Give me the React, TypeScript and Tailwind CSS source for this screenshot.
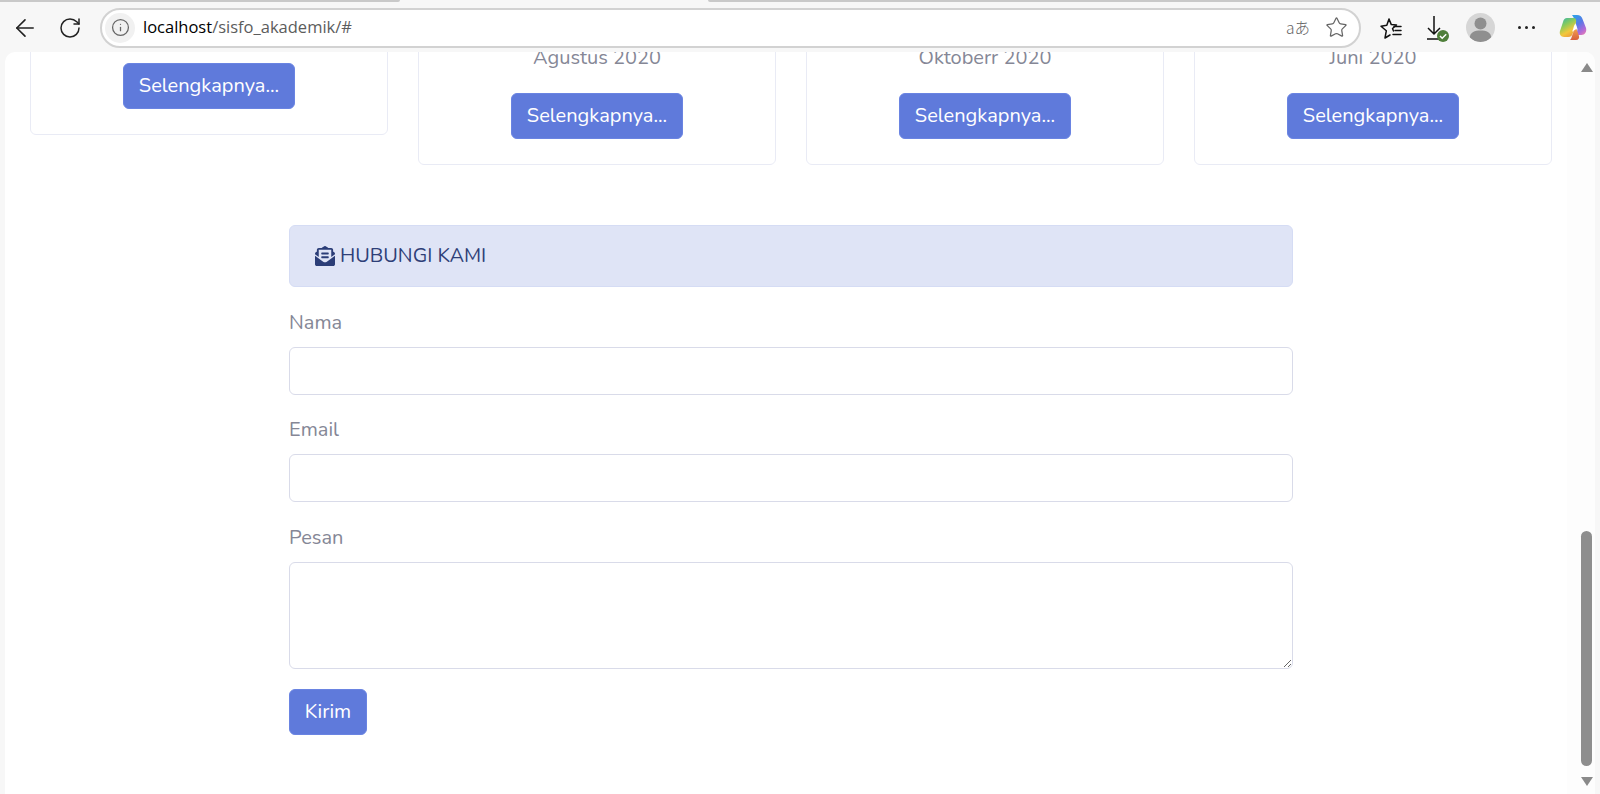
import React from "react";
import { ArrowLeft, RotateCw, Info, Star } from "lucide-react";
import { FaEnvelopeOpenText } from "react-icons/fa";

const Btn = ({ children, cls = "" }: { children: React.ReactNode; cls?: string }) => (
  <button className={`h-[46px] shrink-0 rounded-[6px] border border-[#6a84e2] bg-[#5f7adb] text-[20px] leading-none text-white ${cls}`}>
    {children}
  </button>
);

const Card = ({ date, h }: { date?: string; h: string }) => (
  <div className={`flex w-[358px] shrink-0 flex-col items-center justify-end rounded-[6px] border border-[#e9ebf5] bg-white pb-[25px] ${h}`}>
    {date && <div className="mb-[20px] text-[20px] leading-[30px] text-[#858796]">{date}</div>}
    <Btn cls="w-[172px]">Selengkapnya...</Btn>
  </div>
);

const Label = ({ children }: { children: React.ReactNode }) => (
  <div className="mb-[10px] text-[20px] leading-[28px] text-[#858796]">{children}</div>
);

const inputCls = "block w-full rounded-[6px] border border-[#d9dbe9] bg-white outline-none";

export default function App() {
  return (
    <div className="flex h-[794px] w-[1600px] flex-col overflow-hidden bg-[#f7f7f7] font-['Nunito','Lato','Noto_Sans',sans-serif]">
      <div className="flex h-[3px] shrink-0 items-start justify-between">
        <div className="h-[2px] w-[400px] rounded-br-[3px] bg-[#c9c9c9]" />
        <div className="h-[2px] w-[892px] rounded-bl-[3px] bg-[#c9c9c9]" />
      </div>

      <header className="flex h-[49px] shrink-0 items-center pl-[11px]">
        <ArrowLeft className="h-[28px] w-[28px] text-[#222]" strokeWidth={1.4} />
        <RotateCw className="ml-[19px] h-[24px] w-[24px] text-[#222]" strokeWidth={1.5} />
        <div className="ml-[18px] flex h-[40px] w-[1261px] items-center rounded-full border-2 border-[#d2d2d2] bg-white pl-[3px] pr-[11px]">
          <div className="flex h-[30px] w-[30px] items-center justify-center rounded-full bg-[#f1f1f1]">
            <Info className="h-[19px] w-[19px] text-[#666]" strokeWidth={1.6} />
          </div>
          <div className="ml-[8px] font-['Open_Sans',sans-serif] text-[16.5px] text-[#5c5c5c]">
            <span className="text-black">localhost</span>/sisfo_akademik/#
          </div>
          <div className="ml-auto font-['Noto_Sans_CJK_JP',sans-serif] text-[15.5px] font-light text-[#666]">aあ</div>
          <Star className="ml-[15px] h-[23px] w-[23px] text-[#666]" strokeWidth={1.3} />
        </div>

        <svg className="ml-[18px] h-[24px] w-[24px]" viewBox="0 0 24 24" fill="none" stroke="#111" strokeWidth="1.5" strokeLinejoin="round" strokeLinecap="round">
          <path d="M10 3l2.3 5.6 5.2.4-4 3.5 1 2.5M6 22l1.3-7.2L2 10.2l5.8-.9L10 3M6 22l5-3" />
          <path d="M15 10.5h7M16 14.5h6M14 18.500h8" />
        </svg>
        <svg className="ml-[21px] h-[30px] w-[26px]" viewBox="0 0 26 30" fill="none">
          <path d="M10 3v18M4 15l6 6 6-6M3 26h14" stroke="#111" strokeWidth="1.5" />
          <circle cx="19" cy="23" r="6" fill="#4f7f3a" />
          <path d="M16 23l2.200 2.200 4-4" stroke="#fff" strokeWidth="1.5" />
        </svg>
        <div className="ml-[16px] flex h-[29px] w-[29px] items-center justify-center overflow-hidden rounded-full bg-[#d6d6d6]">
          <svg className="h-[29px] w-[29px]" viewBox="0 0 29 29" fill="#8f8f8f">
            <circle cx="14.500" cy="10.500" r="6" />
            <path d="M3.500 25c1-6 5-7.500 11-7.500s10 1.500 11 7.500c-3 3-7 4-11 4s-8-1-11-4z" />
          </svg>
        </div>
        <div className="ml-[23px] flex w-[17px] justify-between">
          <span className="h-[3px] w-[3px] rounded-full bg-[#222]" />
          <span className="h-[3px] w-[3px] rounded-full bg-[#222]" />
          <span className="h-[3px] w-[3px] rounded-full bg-[#222]" />
        </div>
        <svg className="ml-[24px] h-[27px] w-[28px]" viewBox="0 0 28 27" fill="none">
          <defs>
            <linearGradient id="copa" x1="0.2" y1="0" x2="0.8" y2="1">
              <stop offset="0" stopColor="#2f9fe8" />
              <stop offset="0.45" stopColor="#5a78e6" />
              <stop offset="0.8" stopColor="#b06ad8" />
              <stop offset="1" stopColor="#e07ab8" />
            </linearGradient>
            <linearGradient id="copb" x1="0.2" y1="0" x2="0.7" y2="1">
              <stop offset="0" stopColor="#3fb8a0" />
              <stop offset="0.35" stopColor="#8ccb5a" />
              <stop offset="0.7" stopColor="#f2c83c" />
              <stop offset="1" stopColor="#ee9a3c" />
            </linearGradient>
            <linearGradient id="copc" x1="0.5" y1="0" x2="0.5" y2="1">
              <stop offset="0" stopColor="#f0a050" />
              <stop offset="1" stopColor="#d8603c" />
            </linearGradient>
          </defs>
          <path d="M13 1h5c3 0 4.500 1.500 5.500 4l3.500 9c1 3.500-1 7-4.500 7h-5l1-6-2.500-8c-.6-2-1.500-4-3-6z" fill="url(#copa)" />
          <path d="M8 4h7c2 0 2.500 2.500 2 4.500l-3 10c-.7 3-2 4.500-5 4.500H5c-3 0-5-3-4-6l3-9c.6-2.500 2-4 4-4z" fill="url(#copb)" />
          <path d="M11 26h6c2.500 0 3.500-2 3-4l-2.500-7-2.500 1-2 6c-.5 2-1 3-2 4z" fill="url(#copc)" />
          <path d="M16.500 9.500l1.200 4.500c-1.500 1.500-3 3-4.700 3.800.8-1.800 1.300-3 1.700-4.800.4-1.500 1-2.600 1.800-3.500z" fill="#fff" />
        </svg>
      </header>

      <div className="mx-[5px] flex h-[742px] overflow-hidden rounded-t-[10px] bg-white">
        <main className="ml-[25px] w-[1522px] shrink-0">
          <div className="-mt-[59px] flex items-start gap-[30px]">
            <Card h="h-[142px]" />
            <Card h="h-[172px]" date="Agustus 2020" />
            <Card h="h-[172px]" date="Oktoberr 2020" />
            <Card h="h-[172px]" date="Juni 2020" />
          </div>

          <section className="mt-[60px] ml-[259px] w-[1004px]">
            <div className="mb-[22px] flex h-[62px] items-center rounded-[6px] border border-[#d5dcf4] bg-[#dfe4f6] pl-[25px] text-[20px] text-[#2e3f78]">
              <FaEnvelopeOpenText className="mr-[5px] h-[20px] w-[20px] text-[#2b3d77]" />
              HUBUNGI KAMI
            </div>
            <Label>Nama</Label>
            <input className={`${inputCls} h-[48px]`} />
            <div className="h-[21px]" />
            <Label>Email</Label>
            <input className={`${inputCls} h-[48px]`} />
            <div className="h-[22px]" />
            <Label>Pesan</Label>
            <textarea className={`${inputCls} h-[107px] resize-y`} />
            <Btn cls="mt-[20px] w-[78px]">Kirim</Btn>
          </section>
        </main>

        <aside className="ml-[15px] flex w-[28px] shrink-0 flex-col items-center bg-[#fdfdfd] pl-[11px] pt-[11px]">
          <div className="h-0 w-0 border-x-[6px] border-b-[9px] border-x-transparent border-b-[#8a8a8a]" />
          <div className="mt-[459px] h-[235px] w-[11px] shrink-0 rounded-full bg-[#8e8e8e]" />
          <div className="mt-[11px] h-0 w-0 border-x-[6px] border-t-[9px] border-x-transparent border-t-[#8a8a8a]" />
        </aside>
      </div>
    </div>
  );
}
